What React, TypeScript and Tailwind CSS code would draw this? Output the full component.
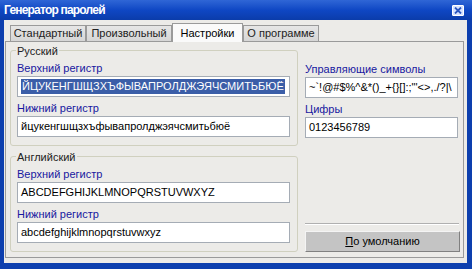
import React from "react";

const Field = ({ value, selected }: { value: string; selected?: boolean }) => (
  <div className="h-[21px] bg-white border border-[#a5acb5] flex items-center px-[3px] overflow-hidden whitespace-nowrap text-[11px] text-black">
    {selected ? <span className="bg-[#3b5ea8] text-white px-[1px] leading-[15px]">{value}</span> : <span>{value}</span>}
  </div>
);

const Label = ({ children }: { children: React.ReactNode }) => (
  <div className="text-[11px] text-[#1818a0] leading-[13px] h-[13px] mb-[1px]">{children}</div>
);

const Group = ({ title, children }: { title: string; children: React.ReactNode }) => (
  <div className="relative h-[96px] border border-[#d0d0bf] rounded-[3px] pt-[11px] pl-[6px] pr-[7px]">
    <div className="absolute -top-[6px] left-[5px] bg-[#ecebe8] px-[1px] text-[11px] leading-[13px] text-[#222]">{title}</div>
    {children}
  </div>
);

const Tab = ({ w, children }: { w: string; children: React.ReactNode }) => (
  <div className={`${w} h-[16px] border border-b-0 border-[#9a9a9a] bg-gradient-to-b from-[#e6e6e6] to-[#d6d6d6] flex items-center justify-center text-[#222] leading-[13px]`}>{children}</div>
);

export default function App() {
  return (
    <div className="w-[472px] h-[269px] bg-[#0d3fae] flex flex-col font-['Liberation_Sans',Arial,sans-serif] pl-[4px] pr-[5px] pb-[6px]">
      <div className="h-[22px] flex items-center justify-between bg-gradient-to-b from-[#2f66d6] via-[#0f47c4] to-[#0b3caa] -ml-[4px] -mr-[5px] pl-[4px] pr-[8px]">
        <span className="text-white font-bold text-[12px] tracking-[-0.8px]">Генератор паролей</span>
        <div className="w-[12px] h-[11px] rounded-[1px] bg-[#d6e2ff] border border-white flex items-center justify-center">
          <svg width="8" height="7" viewBox="0 0 8 7"><path d="M1 0.5 L7 6.5 M7 0.5 L1 6.5" stroke="#2a56c0" strokeWidth="1.8" /></svg>
        </div>
      </div>
      <div className="flex-1 bg-[#ecebe8] flex flex-col pt-[3px] pl-[1px] pr-[3px] pb-[5px]">
        <div className="flex items-end h-[18px] pl-[5px] text-[11px]">
          <Tab w="w-[76px]">Стандартный</Tab>
          <Tab w="w-[86px]">Произвольный</Tab>
          <div className="w-[71px] h-[19px] border border-b-0 border-[#9a9a9a] bg-[#fafafa] flex items-center justify-center text-black relative z-10 -mb-[1px]">Настройки</div>
          <Tab w="w-[76px]">О программе</Tab>
        </div>
        <div className="flex-1 border border-[#9a9a9a] bg-[#ecebe8] flex gap-[7px] pt-[8px] pl-[4px] pr-[3px] pb-[5px]">
          <div className="w-[288px] flex flex-col gap-[10px]">
            <Group title="Русский">
              <Label>Верхний регистр</Label>
              <Field value="ЙЦУКЕНГШЩЗХЪФЫВАПРОЛДЖЭЯЧСМИТЬБЮЁ" selected />
              <div className="h-[5px]" />
              <Label>Нижний регистр</Label>
              <Field value="йцукенгшщзхъфывапролджэячсмитьбюё" />
            </Group>
            <Group title="Английский">
              <Label>Верхний регистр</Label>
              <Field value="ABCDEFGHIJKLMNOPQRSTUVWXYZ" />
              <div className="h-[5px]" />
              <Label>Нижний регистр</Label>
              <Field value="abcdefghijklmnopqrstuvwxyz" />
            </Group>
          </div>
          <div className="flex-1 flex flex-col pt-[13px]">
            <Label>Управляющие символы</Label>
            <div className="mr-[2px]"><Field value={"~`!@#$%^&*()_+{}[]:;\"'<>,./?|\\"} /></div>
            <div className="h-[5px]" />
            <Label>Цифры</Label>
            <div className="mr-[2px]"><Field value="0123456789" /></div>
            <div className="flex-1" />
            <div className="border-t border-[#b0b0b0] border-b border-b-white mr-[1px] mb-[6px]" />
            <div className="h-[21px] bg-[#c4c4c4] border border-t-[#f4f4f4] border-l-[#f4f4f4] border-r-[#808080] border-b-[#808080] flex items-center justify-center text-[11px] text-black">
              <span><span className="underline">П</span>о умолчанию</span>
            </div>
          </div>
        </div>
      </div>
    </div>
  );
}
